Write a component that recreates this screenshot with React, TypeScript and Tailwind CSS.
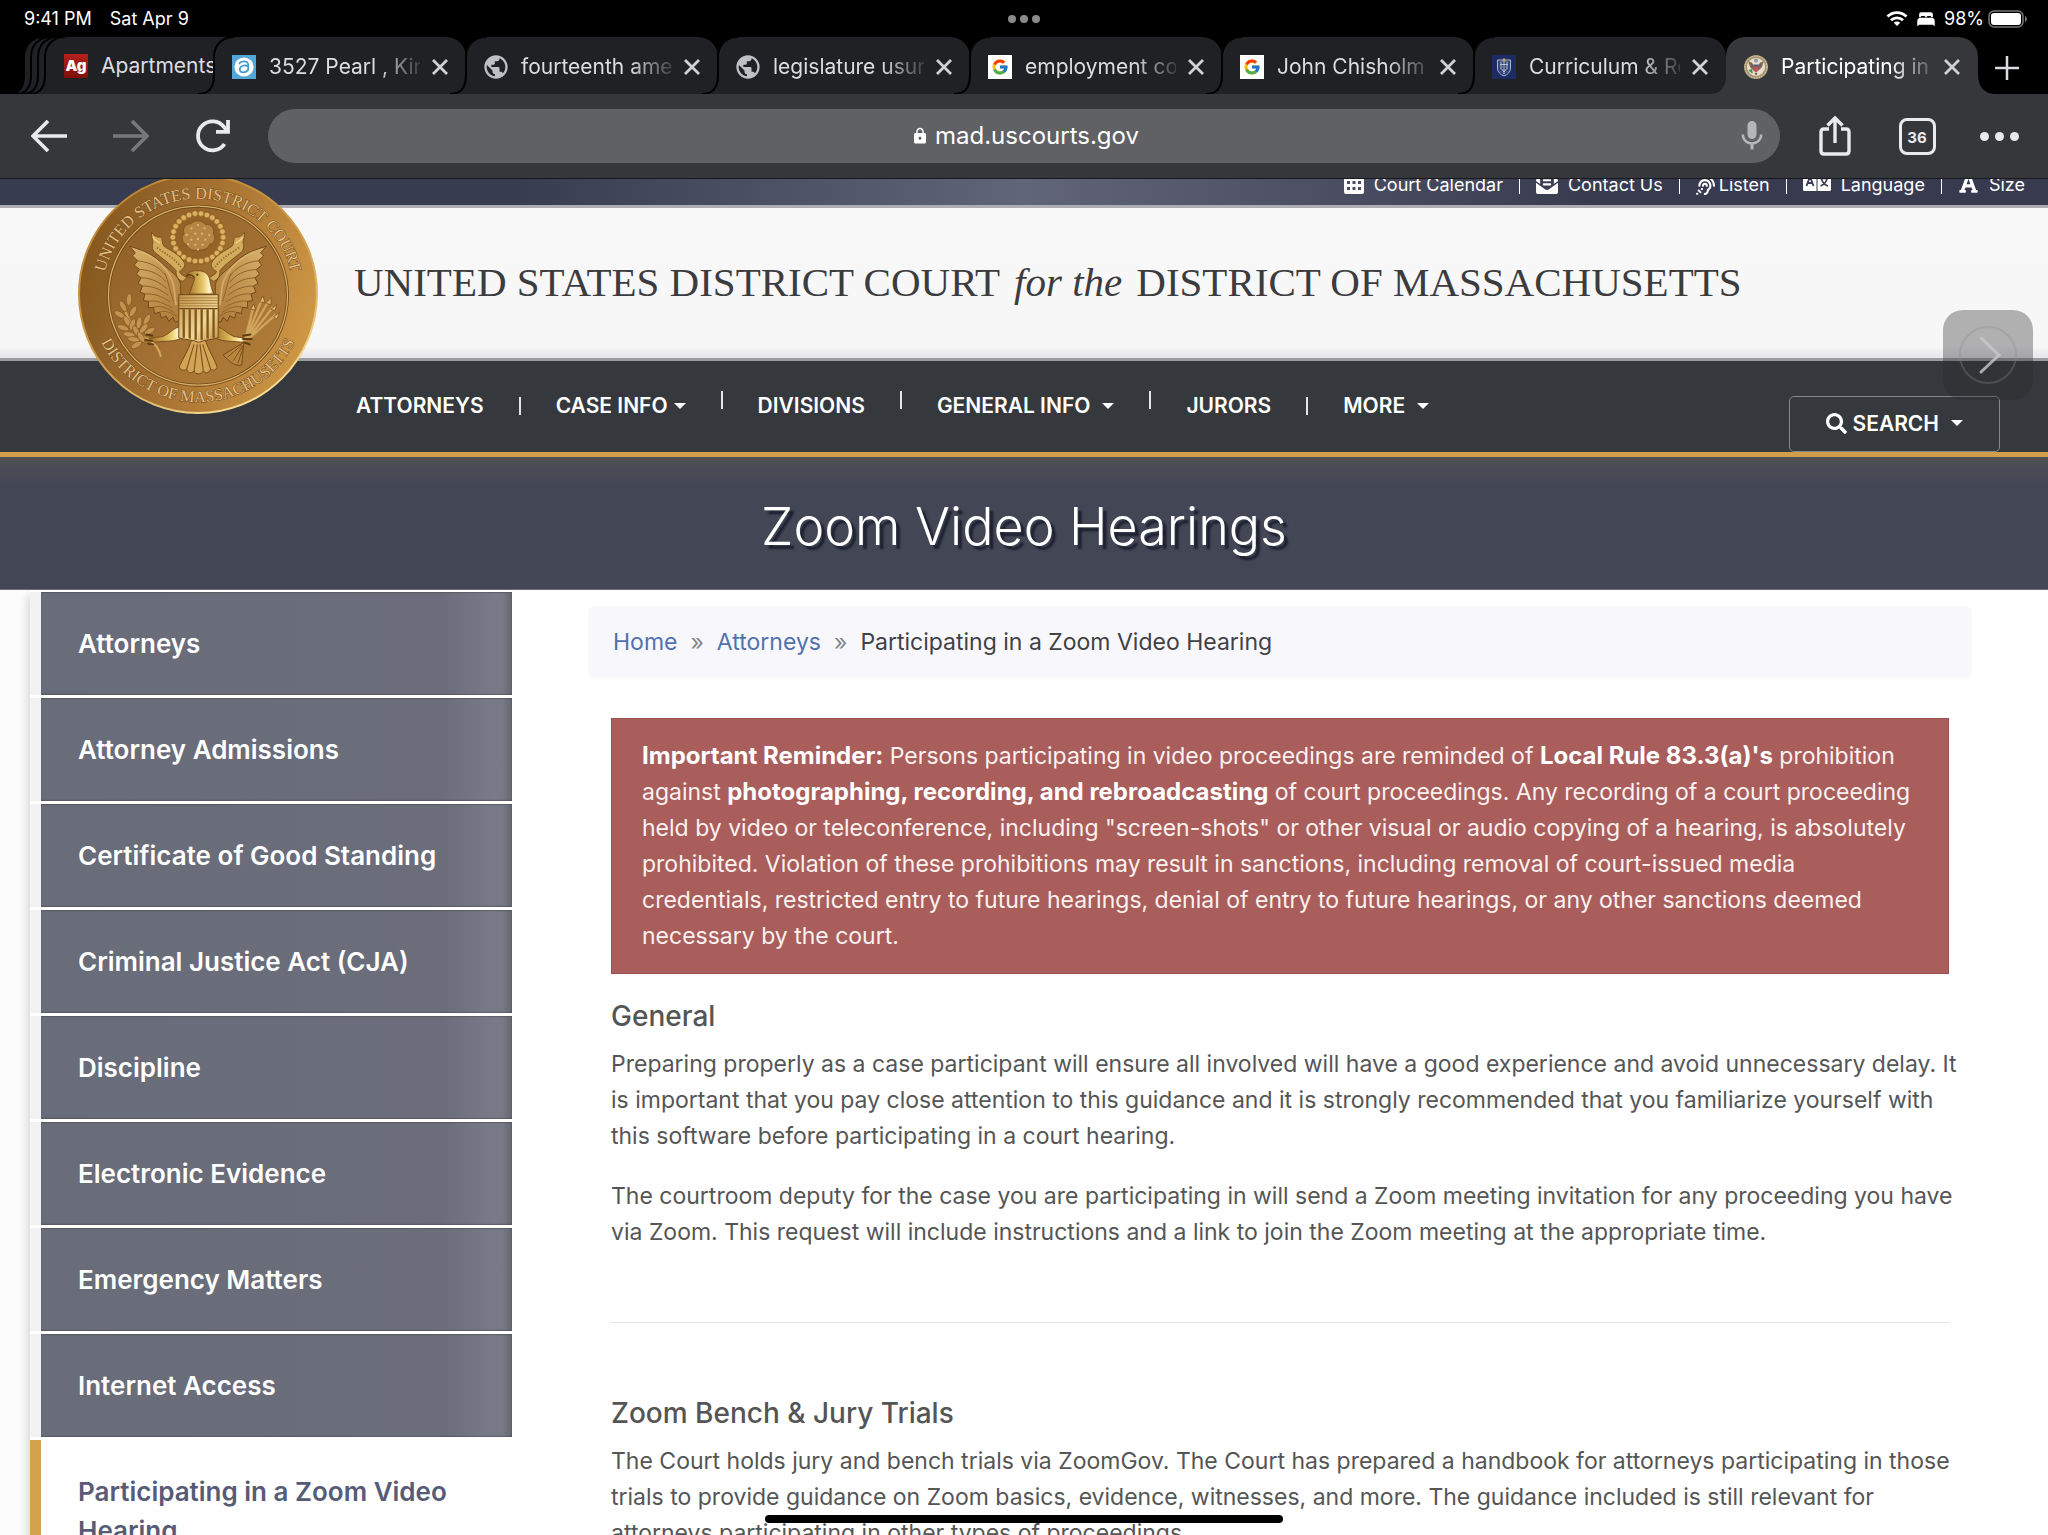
import React from "react";
import { MdPublic, MdMic, MdLock } from "react-icons/md";
import { FcGoogle } from "react-icons/fc";
import { IoBed } from "react-icons/io5";
import {
  FaEnvelopeOpenText,
  FaAssistiveListeningSystems,
  FaFont,
  FaSearch,
} from "react-icons/fa";

/* ---------- browser chrome ---------- */

function TabEdge({ active }: { active?: boolean }) {
  return (
    <svg
      viewBox="0 0 40 57"
      aria-hidden="true"
      className={`absolute -left-4 top-0 h-[57px] w-10 ${active ? "text-[#36373a]" : "text-[#202124]"}`}
    >
      <path d="M0 57 C11 57 16 50 16 38 V20 C16 8 24 0 36 0 H40 V57 Z" fill="currentColor" />
      {!active && (
        <path
          d="M0 57 C11 57 16 50 16 38 V20 C16 8 24 0 36 0"
          fill="none"
          stroke="#000"
          strokeWidth="2"
        />
      )}
    </svg>
  );
}

function ApartmentGuideIcon() {
  return (
    <span className="flex size-6 shrink-0 items-center justify-center bg-gradient-to-b from-[#b3201b] to-[#7e0f0b] text-[15px] leading-none font-black text-white">
      Ag
    </span>
  );
}

function PearlIcon() {
  return (
    <svg viewBox="0 0 24 24" className="size-6 shrink-0">
      <rect width="24" height="24" fill="#52a7d8" />
      <circle cx="12" cy="12" r="9.6" fill="#fff" />
      <path
        d="M7.2 9.2C8 5.8 15.6 5.2 16.2 9.6V15.6M16.2 11.6C13 9.4 8 10.6 7.8 14.2C7.8 18.2 14.4 18.4 16.2 14.4"
        fill="none"
        stroke="#3f9bd0"
        strokeWidth="1.7"
      />
    </svg>
  );
}

function GoogleIcon() {
  return (
    <span className="flex size-6 shrink-0 items-center justify-center bg-white">
      <FcGoogle className="size-[18px]" />
    </span>
  );
}

function SchoolIcon() {
  return (
    <svg viewBox="0 0 24 24" className="size-6 shrink-0">
      <rect width="24" height="24" fill="#1c2c63" />
      <path d="M5.500 5H18.500V13C18.500 17 15.500 19.6 12 21C8.500 19.6 5.500 17 5.500 13Z" fill="#31457e" stroke="#aeb7cc" strokeWidth="1" />
      <path d="M12 3V19M8 9.500H16M9 6.500V14M15 6.500V14M9.500 14L12 17L14.500 14" stroke="#c9cbd0" strokeWidth="0.900" fill="none" />
      <circle cx="12" cy="5.500" r="1.5" fill="#c7a548" />
    </svg>
  );
}

function CourtIcon() {
  return (
    <svg viewBox="0 0 24 24" className="size-6 shrink-0">
      <circle cx="12" cy="12" r="12" fill="#a8946f" />
      <circle cx="12" cy="12" r="11" fill="none" stroke="#e9dfc6" strokeWidth="1" strokeDasharray="1.400 1.200" />
      <circle cx="12" cy="12" r="9" fill="#e6dece" />
      <path d="M4.500 6.500C8 7 9 9 10 11V16L6 12ZM19.500 6.500C16 7 15 9 14 11V16L18 12Z" fill="#7a664c" />
      <path d="M9.500 10H14.500V14C14.500 16 13 17 12 17.500C11 17 9.500 16 9.500 14Z" fill="#b9565a" />
      <rect x="9.500" y="9.500" width="5" height="2" fill="#4a5f8c" />
      <circle cx="12" cy="5.600" r="2" fill="#8c98a8" />
      <path d="M5 15L8.500 18M7 14L8 17" stroke="#4f8a55" strokeWidth="1.500" />
      <path d="M10.500 18L12 20.500L13.500 18Z" fill="#5f4a32" />
    </svg>
  );
}

const globe = <MdPublic className="size-7 -mx-0.5 shrink-0 text-[#bdc1c6]" />;

const tabs: { title: string; icon: React.ReactNode; active?: boolean }[] = [
  { title: "3527 Pearl , Kin", icon: <PearlIcon /> },
  { title: "fourteenth ame", icon: globe },
  { title: "legislature usur", icon: globe },
  { title: "employment co", icon: <GoogleIcon /> },
  { title: "John Chisholm", icon: <GoogleIcon /> },
  { title: "Curriculum & Re", icon: <SchoolIcon /> },
  { title: "Participating in", icon: <CourtIcon />, active: true },
];

function WifiIcon() {
  return (
    <svg viewBox="0 0 22 17" className="mr-2 h-[17px] w-[22px]" fill="none" stroke="currentColor" strokeWidth="2.800">
      <path d="M1.500 6.500A13.500 13.500 0 0 1 20.500 6.500M5 10.300A8.500 8.500 0 0 1 17 10.300" />
      <path d="M11 16L7.800 12.800A4.500 4.500 0 0 1 14.200 12.800Z" fill="currentColor" stroke="none" />
    </svg>
  );
}

function StatusBar() {
  return (
    <div className="relative flex h-[37px] items-center justify-between pr-5 pl-6 text-[18px] leading-none text-white">
      <div className="flex gap-[18px]">
        <span>9:41 PM</span>
        <span>Sat Apr 9</span>
      </div>
      <button type="button" aria-label="Multitasking" className="absolute inset-x-0 top-[15px] mx-auto flex w-fit gap-1">
        <span className="size-2 rounded-full bg-[#8a8a8d]" />
        <span className="size-2 rounded-full bg-[#8a8a8d]" />
        <span className="size-2 rounded-full bg-[#8a8a8d]" />
      </button>
      <div className="flex items-center">
        <WifiIcon />
        <IoBed className="mr-2 size-5" />
        <span>98%</span>
        <svg viewBox="0 0 40 18" className="ml-1 h-[18px] w-10">
          <rect x="1" y="1" width="34" height="16" rx="5" fill="none" stroke="#77777a" strokeWidth="1.500" />
          <rect x="3" y="3" width="30" height="12" rx="3" fill="#fff" />
          <path d="M37 6C39.500 7 39.500 11 37 12Z" fill="#77777a" />
        </svg>
      </div>
    </div>
  );
}

function CloseIcon() {
  return (
    <svg viewBox="0 0 16 16" className="size-4">
      <path d="M1 1L15 15M15 1L1 15" stroke="currentColor" strokeWidth="2.800" />
    </svg>
  );
}

function TabStrip() {
  return (
    <div className="flex h-[57px] overflow-hidden pl-6 text-[21px] leading-none text-[#dcdde0]">
      {[0, 1, 2].map((n) => (
        <div key={n} className="relative w-[7px] shrink-0">
          <TabEdge />
        </div>
      ))}
      <div className="relative w-[169px] shrink-0">
        <div className="absolute inset-y-0 -right-6 left-5 bg-[#202124]" />
        <TabEdge />
        <button type="button" className="relative flex h-full w-full items-center gap-[13px] overflow-hidden pl-[19px] whitespace-nowrap">
          <ApartmentGuideIcon />
          <span>Apartments</span>
        </button>
      </div>
      {tabs.map((tab) => (
        <div key={tab.title} className={`relative min-w-0 flex-1 ${tab.active ? "text-white" : ""}`}>
          <div className={`absolute inset-y-0 right-0 left-5 rounded-tr-[20px] ${tab.active ? "bg-[#36373a]" : "bg-[#202124]"}`} />
          <TabEdge active={tab.active} />
          {tab.active && (
            <svg viewBox="0 0 18 20" aria-hidden="true" className="absolute bottom-0 left-full h-5 w-[18px]">
              <path d="M0 0C0 13 6 20 18 20H0Z" fill="#36373a" />
            </svg>
          )}
          <div className="relative flex h-full items-center px-[18px] pt-0.5">
            {tab.icon}
            <button
              type="button"
              className="ml-[13px] h-8 min-w-0 flex-1 overflow-hidden text-left whitespace-nowrap [mask-image:linear-gradient(to_right,black_72%,transparent_105%)]"
            >
              {tab.title}
            </button>
            <button type="button" aria-label={`Close ${tab.title}`} className="ml-3 text-[#d0d2d6]">
              <CloseIcon />
            </button>
          </div>
        </div>
      ))}
      <button type="button" aria-label="New tab" className="flex w-[70px] shrink-0 items-center justify-center pt-1 pr-3 text-[#dadce0]">
        <svg viewBox="0 0 24 24" className="relative size-6">
          <path d="M12 0V24M0 12H24" stroke="currentColor" strokeWidth="2.500" />
        </svg>
      </button>
    </div>
  );
}

function Toolbar() {
  const btn = "flex h-full w-[82px] shrink-0 items-center justify-center text-[#e8eaed]";
  return (
    <div className="relative z-10 flex h-[85px] items-center border-b border-[#18191c] bg-[#36373a] px-2">
      <button type="button" aria-label="Back" className={btn}>
        <svg viewBox="0 0 36 32" className="h-8 w-9">
          <path d="M36 16H2M17 1L2 16L17 31" fill="none" stroke="currentColor" strokeWidth="3.600" />
        </svg>
      </button>
      <button type="button" aria-label="Forward" className={btn}>
        <svg viewBox="0 0 36 32" className="h-8 w-9 text-[#77787b]">
          <path d="M0 16H34M19 1L34 16L19 31" fill="none" stroke="currentColor" strokeWidth="3.600" />
        </svg>
      </button>
      <button type="button" aria-label="Reload" className={btn}>
        <svg viewBox="0 0 34 34" className="size-[34px]">
          <path d="M28.500 25A14.500 14.500 0 1 1 28 8L31 11.500" fill="none" stroke="currentColor" strokeWidth="3.800" />
          <path d="M20 12.800H32V1" fill="none" stroke="currentColor" strokeWidth="3.800" />
        </svg>
      </button>
      <div className="mx-[14px] flex h-[54px] flex-1 items-center rounded-full bg-[#5f6165] pr-2.5 pl-12">
        <label className="flex flex-1 items-center justify-center gap-1.5 text-white">
          <MdLock className="size-[18px]" aria-label="Address" />
          <input className="field-sizing-content bg-transparent text-[24px] leading-8 outline-none" defaultValue="mad.uscourts.gov" />
        </label>
        <button type="button" aria-label="Voice search" className="text-[#b4b6ba]">
          <MdMic className="size-9" />
        </button>
      </div>
      <button type="button" aria-label="Share" className={btn}>
        <svg viewBox="0 0 32 40" className="h-10 w-8">
          <path d="M10 13H5C3 13 2 14 2 16V35C2 37 3 38 5 38H27C29 38 30 37 30 35V16C30 14 29 13 27 13H22" fill="none" stroke="currentColor" strokeWidth="3.400" />
          <path d="M16 27V3M8.500 9.500L16 2L23.500 9.500" fill="none" stroke="currentColor" strokeWidth="3.400" />
        </svg>
      </button>
      <button type="button" aria-label="36 open tabs" className={btn}>
        <span className="flex size-[37px] items-center justify-center rounded-[8px] border-[3px] border-current pt-0.5 text-[15px] leading-none font-bold">
          36
        </span>
      </button>
      <button type="button" aria-label="More" className={`${btn} gap-1.5`}>
        <span className="size-[9px] rounded-full bg-current" />
        <span className="size-[9px] rounded-full bg-current" />
        <span className="size-[9px] rounded-full bg-current" />
      </button>
    </div>
  );
}

/* ---------- court seal ---------- */

const beads = Array.from({ length: 26 }, (_, i) => {
  const a = (i / 26) * Math.PI * 2;
  return { x: 386 + Math.cos(a) * 76, y: 187 + Math.sin(a) * 72 };
});

const stars = [
  [386, 150], [366, 160], [406, 160], [352, 180], [378, 176], [398, 176], [420, 180],
  [366, 194], [386, 192], [408, 194], [356, 208], [378, 210], [400, 210], [386, 224],
];

const leaves = [
  [160, 395, 60], [178, 375, 95], [150, 420, 30], [190, 410, 120], [172, 440, 60],
  [160, 460, 20], [188, 450, 110], [208, 445, 100], [232, 435, 120], [200, 470, 60],
  [178, 480, 10], [222, 462, 130], [192, 495, 10], [240, 470, 150], [214, 488, 60],
  [200, 512, 150],
];

function Wing() {
  return (
    <g>
      <path
        d="M180 214 L205 222 C232 230 258 246 276 264 C300 288 326 300 334 330 V436 L318 444 L310 428 L298 441 L290 424 L276 431 L270 413 L255 417 L252 398 L236 400 L237 380 L221 378 L226 358 L211 352 L219 334 L205 326 L214 309 L200 298 L210 284 L194 271 L204 258 L188 243 L197 234 Z"
        fill="url(#wing)"
        stroke="#70481a"
        strokeWidth="3"
      />
      <path
        d="M204 258 C245 262 272 280 290 304 M210 284 C248 286 272 300 290 322 M214 309 C250 310 272 324 292 342 M219 334 C254 334 274 346 296 362 M226 358 C256 356 278 366 302 382 M237 380 C262 376 284 386 308 400 M252 398 C274 392 292 400 314 414 M270 413 C288 406 304 414 322 426"
        fill="none"
        stroke="#8f6329"
        strokeWidth="3"
      />
      <path d="M215 232 C260 246 300 286 312 330 C316 350 316 370 320 392" fill="none" stroke="#e0bd78" strokeWidth="5" opacity=".7" />
      <path d="M286 296 C298 320 300 350 312 380" fill="none" stroke="#8f6329" strokeWidth="3" />
    </g>
  );
}

function Ribbon() {
  return (
    <g>
      <path
        d="M246 172 C252 182 262 188 274 186 C280 190 276 206 284 214 C304 228 334 240 346 266 C348 276 340 284 330 290 C334 302 346 302 352 310 L340 320 C326 316 318 302 320 288 C306 270 280 252 260 236 C248 228 246 214 250 204 C250 192 244 184 246 172Z"
        fill="#d3ab5d"
        stroke="#7b501b"
        strokeWidth="3"
      />
      <path d="M262 218 C290 238 316 250 334 276" fill="none" stroke="#8b5f25" strokeWidth="5" strokeDasharray="4 5" />
      <path d="M250 186 C256 198 266 200 272 204" fill="none" stroke="#f1d68f" strokeWidth="4" />
    </g>
  );
}

function Seal() {
  return (
    <svg viewBox="24 -4 724 724" role="img" aria-label="Seal of the United States District Court, District of Massachusetts" className="size-60">
      <defs>
        <linearGradient id="disc" x1="0" y1=".3" x2="1" y2=".6">
          <stop offset="0" stopColor="#84571b" />
          <stop offset=".25" stopColor="#94642a" />
          <stop offset=".6" stopColor="#b07a36" />
          <stop offset="1" stopColor="#cf9846" />
        </linearGradient>
        <linearGradient id="rim" x1=".2" y1="0" x2=".8" y2="1">
          <stop offset="0" stopColor="#bb8331" />
          <stop offset=".55" stopColor="#d2a04b" />
          <stop offset="1" stopColor="#ffe9a4" />
        </linearGradient>
        <linearGradient id="field" x1="0" y1="0" x2="1" y2="1">
          <stop offset="0" stopColor="#8c5d27" />
          <stop offset="1" stopColor="#b5803b" />
        </linearGradient>
        <linearGradient id="wing" x1="0" y1="0" x2="1" y2="1">
          <stop offset="0" stopColor="#d9b26a" />
          <stop offset="1" stopColor="#ab7938" />
        </linearGradient>
        <linearGradient id="shield" x1="0" y1="0" x2="1" y2="1">
          <stop offset="0" stopColor="#c19148" />
          <stop offset=".6" stopColor="#f0d893" />
          <stop offset="1" stopColor="#c39243" />
        </linearGradient>
        <linearGradient id="head" x1="0" y1="0" x2="1" y2="0">
          <stop offset="0" stopColor="#9a6a22" />
          <stop offset=".6" stopColor="#e8c766" />
          <stop offset=".85" stopColor="#fff6cf" />
          <stop offset="1" stopColor="#c59645" />
        </linearGradient>
        <path id="arc-top" d="M 98 358 A 288 288 0 0 1 674 358" />
        <path id="arc-bottom" d="M 60 358 A 326 326 0 0 0 712 358" />
      </defs>
      <circle cx="386" cy="358" r="359" fill="url(#disc)" stroke="url(#rim)" strokeWidth="6" />
      <circle cx="386" cy="363" r="270" fill="url(#field)" stroke="#6f481a" strokeWidth="9" />
      <circle cx="386" cy="363" r="270" fill="none" stroke="#d9b066" strokeWidth="4" />
      <g fontFamily="Liberation Serif, serif" fontSize="49" textAnchor="middle" fill="#e2c08a" stroke="#6f4716" strokeWidth="3" paintOrder="stroke">
        <text>
          <textPath href="#arc-top" startOffset="50%">UNITED STATES DISTRICT COURT</textPath>
        </text>
        <text>
          <textPath href="#arc-bottom" startOffset="50%">DISTRICT OF MASSACHUSETTS</textPath>
        </text>
      </g>
      <circle cx="386" cy="187" r="84" fill="#8f5f23" opacity=".6" />
      {beads.map((b, i) => (
        <circle key={i} cx={b.x} cy={b.y} r="8.500" fill="#d9b15f" stroke="#8a5c20" strokeWidth="1.500" />
      ))}
      <path
        d="M364 146 C374 134 398 134 408 148 C426 146 438 162 432 176 C442 188 436 206 422 208 C416 224 396 228 386 224 C374 230 356 224 352 210 C338 204 334 186 344 176 C338 160 348 146 364 146Z"
        fill="#b58543"
        stroke="#7f5420"
        strokeWidth="3"
      />
      {stars.map(([x, y], i) => (
        <circle key={i} cx={x} cy={y} r="3.500" fill="#dbb777" />
      ))}
      <Wing />
      <g transform="matrix(-1 0 0 1 772 0)">
        <Wing />
      </g>
      <Ribbon />
      <g transform="matrix(-1 0 0 1 772 0)">
        <Ribbon />
      </g>
      <path
        d="M360 358 C366 340 372 322 376 312 C366 306 356 308 350 304 C354 292 368 286 384 288 C404 286 420 298 422 318 C424 334 430 346 434 358Z"
        fill="url(#head)"
        stroke="#7b501b"
        strokeWidth="3"
      />
      <path d="M350 304 C358 298 368 300 376 308" fill="none" stroke="#5d3b11" strokeWidth="4" />
      <circle cx="384" cy="300" r="3.500" fill="#5d3b11" />
      <path d="M330 456 C310 462 300 478 280 486 L240 492 L244 504 L300 500 C318 500 334 492 344 488Z" fill="url(#head)" stroke="#7b501b" strokeWidth="3" />
      <path d="M444 456 C464 462 474 478 494 486 L530 492 L528 504 L474 500 C456 500 440 492 430 488Z" fill="url(#head)" stroke="#7b501b" strokeWidth="3" />
      <path d="M232 492 C256 506 270 524 274 548 M160 392 C176 440 200 484 246 500" fill="none" stroke="#d3aa5c" strokeWidth="6" />
      {leaves.map(([x, y, r], i) => (
        <ellipse key={i} cx={x} cy={y} rx="18" ry="8" transform={`rotate(${r} ${x} ${y})`} fill="#c39350" stroke="#75491a" strokeWidth="1.500" />
      ))}
      <path
        d="M528 496 L552 400 M530 496 L578 376 M532 496 L598 380 M534 496 L612 398 M536 496 L620 420 M526 500 L546 430"
        fill="none"
        stroke="#cfa45c"
        strokeWidth="7"
      />
      <path d="M545 404 L554 388 L560 406Z M572 382 L582 364 L588 384Z M592 386 L606 368 L606 390Z M606 404 L624 390 L618 408Z M614 426 L632 414 L624 434Z" fill="#e0b96b" stroke="#75491a" strokeWidth="2" />
      <path d="M524 504 L518 572 C504 578 484 566 462 542Z" fill="#b8863d" stroke="#75491a" strokeWidth="3" />
      <path d="M518 512 L476 548 M521 514 L492 560 M523 518 L506 568" stroke="#7b501b" strokeWidth="3" />
      <path d="M230 480 l18 4 m-20 12 l20 4 m-12 8 l14 2 M522 484 l22 -4 m-22 14 l26 0 m-24 10 l18 6" stroke="#5d3b11" strokeWidth="6" strokeLinecap="round" />
      <path
        d="M366 498 H408 C420 530 436 556 444 578 C438 592 428 588 424 584 C418 600 408 598 402 590 C396 602 378 602 374 590 C366 600 354 596 352 584 C344 592 330 588 330 576 C340 554 356 530 366 498Z"
        fill="#d2a556"
        stroke="#75491a"
        strokeWidth="3"
      />
      <path d="M374 510 L352 584 M384 510 L374 590 M392 510 L402 590 M400 510 L424 584" stroke="#80541f" strokeWidth="3.500" />
      <path d="M328 360 H447 V490 C430 496 404 496 388 504 C372 496 346 496 328 490Z" fill="url(#shield)" stroke="#6f481a" strokeWidth="3" />
      <path d="M330 370 H446 M330 378 H446 M330 386 H446 M330 394 H446" stroke="#8d6225" strokeWidth="2" />
      <path d="M330 402 H446" stroke="#6f481a" strokeWidth="4" />
      <path d="M343 404 V490 M361 404 V492 M379 404 V496 M397 404 V496 M415 404 V492 M433 404 V490" stroke="#80541f" strokeWidth="7" />
    </svg>
  );
}

/* ---------- court site ---------- */

function CalendarIcon() {
  return (
    <svg viewBox="0 0 20 18" className="h-[18px] w-5">
      <path
        fill="currentColor"
        fillRule="evenodd"
        d="M2 0H18A2 2 0 0 1 20 2V16A2 2 0 0 1 18 18H2A2 2 0 0 1 0 16V2A2 2 0 0 1 2 0ZM3 5V8H6V5ZM8.500 5V8H11.500V5ZM14 5V8H17V5ZM3 11V14H6V11ZM8.500 11V14H11.500V11ZM14 11V14H17V11Z"
      />
    </svg>
  );
}

function LanguageIcon() {
  return (
    <svg viewBox="0 0 28 20" className="mb-2 h-5 w-7">
      <path d="M1.500 0H13.500V20H1.500A1.500 1.500 0 0 1 0 18.500V1.500A1.500 1.500 0 0 1 1.500 0ZM14.500 0H26.500A1.500 1.500 0 0 1 28 1.500V18.500A1.500 1.500 0 0 1 26.500 20H14.500Z" fill="currentColor" />
      <path d="M3.500 15L7 5.500L10.500 15M5 12H9" fill="none" stroke="#393c52" strokeWidth="1.800" />
      <path d="M17 7.500H25.500M21.200 5V7.500M24 7.500C23.500 11 21 13.500 17.500 15M18.500 8C19.500 11.500 22 14 25 15" fill="none" stroke="#393c52" strokeWidth="1.600" />
    </svg>
  );
}

const utilities = [
  { label: "Court Calendar", icon: <CalendarIcon /> },
  { label: "Contact Us", icon: <FaEnvelopeOpenText className="mb-1 size-[22px]" /> },
  { label: "Listen", icon: <FaAssistiveListeningSystems className="-mr-1.5 size-[19px]" /> },
  { label: "Language", icon: <LanguageIcon /> },
  { label: "Size", icon: <FaFont className="mb-1 size-[21px]" /> },
];

function UtilityBar() {
  return (
    <div className="-mt-3.5 flex h-10 items-center justify-end bg-[linear-gradient(90deg,#383c51_25%,#61657a_50%,#383b50_78%)] pr-[23px] text-[18px] leading-none text-white">
      {utilities.map((u, i) => (
        <React.Fragment key={u.label}>
          {i > 0 && <span className="mx-4 h-[18px] w-px bg-white" />}
          <a href="#" className="flex items-center gap-2.5">
            {u.icon}
            {u.label}
          </a>
        </React.Fragment>
      ))}
    </div>
  );
}

function Caret() {
  return (
    <svg viewBox="0 0 12 6" className="h-1.5 w-3">
      <path d="M0 0H12L6 6Z" fill="currentColor" />
    </svg>
  );
}

function Divider({ raised }: { raised?: boolean }) {
  return (
    <span className={raised ? "pb-3" : ""}>
      <span className="block h-[18px] w-0.5 bg-[#e4e5e6]" />
    </span>
  );
}

function MainNav() {
  return (
    <nav className="flex h-24 items-center border-b-[5px] border-[#d09f47] bg-[#35393d] pr-12 pl-[356px] text-[21px] leading-none font-semibold text-white">
      <div className="flex flex-1 items-center gap-[35px] pb-0.5">
        <a href="#">ATTORNEYS</a>
        <Divider />
        <button type="button" className="flex items-center gap-1.5">
          CASE INFO <Caret />
        </button>
        <Divider raised />
        <a href="#">DIVISIONS</a>
        <Divider raised />
        <button type="button" className="flex items-center gap-3">
          GENERAL INFO <Caret />
        </button>
        <Divider raised />
        <a href="#">JURORS</a>
        <Divider />
        <button type="button" className="flex items-center gap-3">
          MORE <Caret />
        </button>
      </div>
      <button type="button" className="flex h-14 items-center self-end rounded-[5px] border border-[#85888b] px-9 pb-0.5">
        <FaSearch className="mr-1.5 size-[21px]" />
        SEARCH
        <span className="ml-3">
          <Caret />
        </span>
      </button>
    </nav>
  );
}

const sections = [
  "Attorneys",
  "Attorney Admissions",
  "Certificate of Good Standing",
  "Criminal Justice Act (CJA)",
  "Discipline",
  "Electronic Evidence",
  "Emergency Matters",
  "Internet Access",
];

function Sidebar() {
  return (
    <aside className="w-1/4 shrink-0 bg-[#fcfcfc] pl-[30px]">
      <ul className="flex flex-col gap-[3px] bg-white pt-0.5 text-[26px] leading-[39px] font-semibold text-white shadow-[-3px_6px_8px_rgba(0,0,0,0.14)]">
        {sections.map((s) => (
          <li key={s} className="border-l-[11px] border-[#f2f2f2]">
            <a
              href="#"
              className="block bg-[linear-gradient(90deg,#696c79_0%,#6b6d7a_85%,#787b87_96%,#777a86_98%,#65666f_100%)] px-[37px] py-8 shadow-[inset_0_1px_1px_rgba(70,70,75,0.5),inset_0_-1px_1px_rgba(70,70,75,0.5)]"
            >
              {s}
            </a>
          </li>
        ))}
        <li className="border-l-[11px] border-[#d3a24d]">
          <a href="#" aria-current="page" className="block px-[37px] py-8 text-[#565b76]">
            Participating in a Zoom Video Hearing
          </a>
        </li>
      </ul>
    </aside>
  );
}

function Strong({ children }: { children: React.ReactNode }) {
  return <b className="text-[24px] text-white">{children}</b>;
}

function Content() {
  return (
    <main className="min-w-0 flex-1 bg-white px-[76px] pt-4 text-[23px] leading-9 text-[#555]">
      <nav aria-label="Breadcrumb" className="flex h-[72px] items-center gap-[13px] rounded-md bg-[#f8f8fc] px-[25px] text-[#414146]">
        <a href="#" className="text-[#5271b0]">Home</a>
        <span className="text-[#84868c]">»</span>
        <a href="#" className="text-[#5271b0]">Attorneys</a>
        <span className="text-[#84868c]">»</span>
        <span>Participating in a Zoom Video Hearing</span>
      </nav>
      <div className="mx-[23px] mt-10">
        <div role="alert" className="border border-[#9c4f50] bg-[#a95e5c] px-[30px] py-[19px] text-[#fbf1ef]">
          <Strong>Important Reminder:</Strong> Persons participating in video proceedings are reminded of{" "}
          <Strong>Local Rule 83.3(a)'s</Strong> prohibition against{" "}
          <Strong>photographing, recording, and rebroadcasting</Strong> of court proceedings. Any recording of a court
          proceeding held by video or teleconference, including "screen-shots" or other visual or audio copying of a
          hearing, is absolutely prohibited. Violation of these prohibitions may result in sanctions, including removal
          of court-issued media credentials, restricted entry to future hearings, denial of entry to future hearings,
          or any other sanctions deemed necessary by the court.
        </div>
        <h2 className="mt-6 mb-3 text-[28px] font-medium">General</h2>
        <p className="-mr-4 mb-6">
          Preparing properly as a case participant will ensure all involved will have a good experience and avoid
          unnecessary delay. It is important that you pay close attention to this guidance and it is strongly
          recommended that you familiarize yourself with this software before participating in a court hearing.
        </p>
        <p className="-mr-4">
          The courtroom deputy for the case you are participating in will send a Zoom meeting invitation for any
          proceeding you have via Zoom. This request will include instructions and a link to join the Zoom meeting at
          the appropriate time.
        </p>
        <hr className="my-[72px] border-[#e3e3e5]" />
        <h2 className="mb-3 text-[28px] font-medium">Zoom Bench &amp; Jury Trials</h2>
        <p className="-mr-4">
          The Court holds jury and bench trials via ZoomGov. The Court has prepared a handbook for attorneys
          participating in those trials to provide guidance on Zoom basics, evidence, witnesses, and more. The guidance
          included is still relevant for attorneys participating in other types of proceedings.
        </p>
      </div>
    </main>
  );
}

export default function App() {
  return (
    <div className="relative flex h-screen flex-col overflow-hidden bg-black font-['Inter',sans-serif]">
      <StatusBar />
      <TabStrip />
      <Toolbar />
      <div className="relative min-h-0 flex-1 overflow-hidden bg-white">
        <UtilityBar />
        <header className="flex h-[156px] items-center border-t-[3px] border-b-[3px] border-t-[#aeacb3] border-b-[#9b9d9f] bg-[linear-gradient(180deg,#f8f8f9_0%,#f7f7f8_92%,#e6e6e8_100%)] pb-0.5 pl-[354px]">
          <h1 className="flex gap-3.5 font-['Liberation_Serif',serif] text-[41px] leading-none whitespace-nowrap text-[#3c3c3f]">
            <span>UNITED STATES DISTRICT COURT</span>
            <i>for the</i>
            <span>DISTRICT OF MASSACHUSETTS</span>
          </h1>
        </header>
        <MainNav />
        <div className="flex h-[133px] items-center justify-center border-b border-[#6f6c7a] bg-[linear-gradient(180deg,#504f53_0px,#4a4b55_12px,#424655_28px,#424655_100%)] pt-2 text-[52px] leading-none font-light text-white [text-shadow:4px_4px_2px_#1d2130]">
          <h2>Zoom Video Hearings</h2>
        </div>
        <div className="flex">
          <Sidebar />
          <Content />
        </div>
        <div className="absolute -top-[5px] left-[78px]">
          <Seal />
        </div>
        <button
          type="button"
          aria-label="Next"
          className="absolute top-[131px] right-[15px] flex size-[90px] items-center justify-center rounded-[20px] bg-[#2b2b2d]/35"
        >
          <svg viewBox="0 0 60 60" className="size-[60px]">
            <circle cx="30" cy="30" r="28" fill="none" stroke="#8b8b8d" strokeOpacity=".3" strokeWidth="2" />
            <path d="M23 13L41 30L23 47" fill="none" stroke="#c9c9cb" strokeOpacity=".8" strokeWidth="3" strokeLinecap="round" />
          </svg>
        </button>
      </div>
      <div className="absolute inset-x-0 bottom-3 mx-auto h-2 w-[518px] rounded-full bg-black" />
    </div>
  );
}
